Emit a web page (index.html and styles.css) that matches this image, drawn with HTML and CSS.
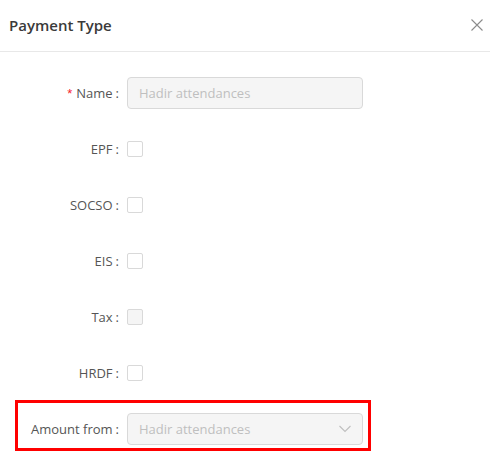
FILE: index.html
```html
<!DOCTYPE html>
<html>
<head>
<meta charset="utf-8">
<link rel="stylesheet" href="styles.css">
</head>
<body>
<div class="modal">
  <div class="modal-header">
    <div class="modal-title">Payment Type</div>
    <button class="close" aria-label="Close">
      <svg width="12" height="12" viewBox="0 0 12 12"><path d="M0.5 0.5L11.5 11.5M11.5 0.5L0.5 11.5" stroke="#8c8c8c" stroke-width="1.1" fill="none"/></svg>
    </button>
  </div>
  <div class="modal-body">
    <div class="row">
      <label class="label"><span class="req">*</span>Name</label>
      <div class="input disabled"><span class="placeholder">Hadir attendances</span></div>
    </div>
    <div class="row">
      <label class="label">EPF</label>
      <span class="checkbox"></span>
    </div>
    <div class="row">
      <label class="label">SOCSO</label>
      <span class="checkbox"></span>
    </div>
    <div class="row">
      <label class="label">EIS</label>
      <span class="checkbox"></span>
    </div>
    <div class="row">
      <label class="label">Tax</label>
      <span class="checkbox disabled"></span>
    </div>
    <div class="row">
      <label class="label">HRDF</label>
      <span class="checkbox"></span>
    </div>
    <div class="highlight">
      <div class="row row-last">
        <label class="label label-short">Amount from</label>
        <div class="input disabled select">
          <span class="placeholder">Hadir attendances</span>
          <svg class="arrow" width="12" height="8" viewBox="0 0 12 8"><path d="M0.5 1L6 6.5L11.5 1" stroke="#bfbfbf" stroke-width="1.1" fill="none"/></svg>
        </div>
      </div>
    </div>
  </div>
</div>
</body>
</html>
```
FILE: styles.css
```css
html, body {
  margin: 0;
  padding: 0;
  background: #fff;
}
body {
  font-family: "Open Sans", "Noto Sans", sans-serif;
  font-size: 13px;
  color: #555;
}
.modal {
  width: 490px;
}
.modal-header {
  height: 52px;
  border-bottom: 1px solid #e8e8e8;
  display: flex;
  align-items: center;
  justify-content: space-between;
  padding: 0 7px 0 9px;
  box-sizing: border-box;
}
.modal-title {
  font-size: 15px;
  font-weight: 600;
  color: #3a3a3a;
  margin-top: -2px;
}
.close {
  border: 0;
  background: none;
  padding: 0;
  width: 12px;
  height: 12px;
  display: flex;
  margin-top: -1px;
}
.modal-body {
  padding-top: 25px;
}
.row {
  display: flex;
  align-items: center;
  height: 32px;
  margin-bottom: 24px;
}
.label {
  width: 119px;
  flex: none;
  text-align: right;
  color: #555;
  white-space: nowrap;
}
.label::after {
  content: ":";
  margin: 0 0 0 3px;
}
.req {
  color: #f5222d;
  margin-right: 4px;
  font-family: "Liberation Sans", sans-serif;
}
.label-short {
  width: 101px;
}
.input {
  margin-left: 8px;
  width: 236px;
  height: 32px;
  box-sizing: border-box;
  border: 1px solid #d9d9d9;
  border-radius: 4px;
  padding: 0 11px;
  display: flex;
  align-items: center;
}
.input.disabled {
  background: #f5f5f5;
}
.placeholder {
  color: #bfbfbf;
  flex: 1;
}
.checkbox {
  margin-left: 8px;
  width: 16px;
  height: 16px;
  box-sizing: border-box;
  border: 1px solid #d9d9d9;
  border-radius: 2px;
  background: #fff;
}
.checkbox.disabled {
  background: #f5f5f5;
}
.highlight {
  margin: -13px 0 0 15px;
  width: 356px;
  box-sizing: border-box;
  border: 3px solid #ff0000;
  padding: 10px 0 3px;
}
.row-last {
  margin-bottom: 0;
}
```
